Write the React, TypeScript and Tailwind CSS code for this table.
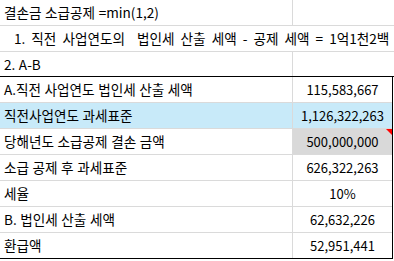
const rows = [
  { label: "A.직전 사업연도 법인세 산출 세액", value: "115,583,667" },
  { label: "직전사업연도 과세표준", value: "1,126,322,263", blue: true },
  { label: "당해년도 소급공제 결손 금액", value: "500,000,000", gray: true },
  { label: "소급 공제 후 과세표준", value: "626,322,263" },
  { label: "세율", value: "10%" },
  { label: "B. 법인세 산출 세액", value: "62,632,226" },
  { label: "환급액", value: "52,951,441" },
];

function App() {
  return (
    <div
      className="w-[394px] h-[261px] bg-white text-[13.6px] text-black overflow-hidden [word-spacing:0.5px]"
      style={{ fontFamily: '"Noto Sans CJK KR", "Noto Sans", sans-serif' }}
    >
      <div className="flex h-[26px] border-b border-[#dadada]">
        <div className="w-[293px] border-r border-[#dadada] flex items-center pl-[4px] whitespace-nowrap">
          결손금 소급공제 =min(1,2)
        </div>
        <div className="flex-1" />
      </div>
      <div className="flex h-[26px] border-b border-[#dadada] items-center pl-[14px] whitespace-pre [word-spacing:3px]">
        {"1. 직전 사업연도의  법인세 산출 세액 - 공제 세액 = 1억1천2백"}
      </div>
      <div className="flex h-[25px] border-b border-black">
        <div className="w-[293px] border-r border-[#dadada] flex items-center pl-[4px]">
          2. A-B
        </div>
        <div className="flex-1" />
      </div>
      <div className="w-[393px] border-r border-black">
        {rows.map((r, i) => (
          <div
            key={r.label}
            className={
              "flex h-[26px] border-b " +
              (i === rows.length - 1 ? "border-black" : "border-[#dadada]") +
              (r.blue ? " bg-[#c8eaf9]" : "")
            }
          >
            <div className="w-[293px] border-r border-[#dadada] flex items-center pl-[4px] whitespace-nowrap">
              {r.label}
            </div>
            <div
              className={
                "relative flex-1 flex items-center justify-center text-[13px]" +
                (r.gray ? " bg-[#d9d9d9]" : "")
              }
            >
              {r.value}
              {r.gray && (
                <div className="absolute top-0 right-0 w-0 h-0 border-t-[6px] border-l-[6px] border-t-[#ff0000] border-l-transparent" />
              )}
            </div>
          </div>
        ))}
      </div>
    </div>
  );
}

export default App;
